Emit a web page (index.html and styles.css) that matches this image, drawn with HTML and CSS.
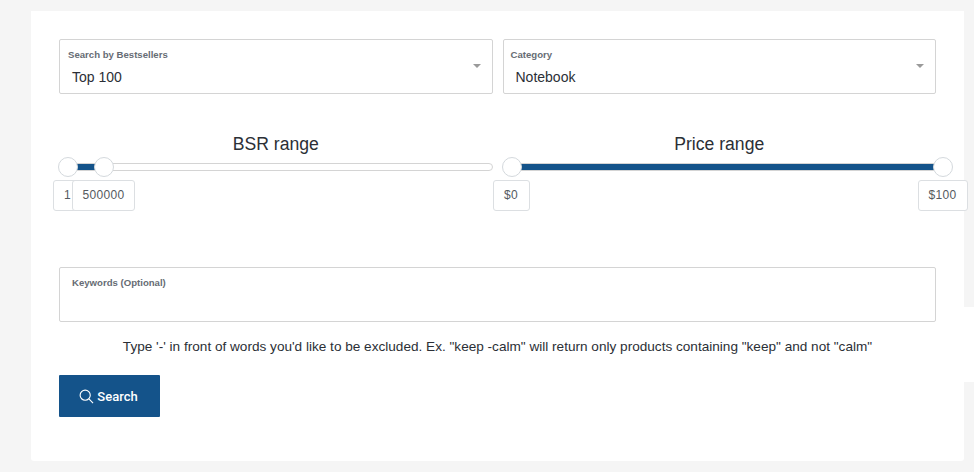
FILE: index.html
```html
<!DOCTYPE html>
<html lang="en">
<head>
<meta charset="utf-8">
<title>Search</title>
<link rel="stylesheet" href="styles.css">
</head>
<body>
<div class="gap-patch"></div>
<main class="card">
  <div class="row selects">
    <div class="field">
      <span class="label">Search by Bestsellers</span>
      <span class="value">Top 100</span>
      <span class="caret"></span>
    </div>
    <div class="field">
      <span class="label label-tight">Category</span>
      <span class="value">Notebook</span>
      <span class="caret"></span>
    </div>
  </div>
  <div class="row sliders">
    <section class="slider">
      <h2 class="slider-title">BSR range</h2>
      <div class="rail bsr-rail">
        <div class="fill bsr-fill"></div>
        <span class="handle bsr-low"></span>
        <span class="handle bsr-high"></span>
        <span class="tip bsr-low-tip">1</span>
        <span class="tip bsr-high-tip">500000</span>
      </div>
    </section>
    <section class="slider">
      <h2 class="slider-title">Price range</h2>
      <div class="rail price-rail">
        <div class="fill price-fill"></div>
        <span class="handle price-low"></span>
        <span class="handle price-high"></span>
        <span class="tip price-low-tip">$0</span>
        <span class="tip price-high-tip">$100</span>
      </div>
    </section>
  </div>
  <div class="field keywords">
    <span class="label">Keywords (Optional)</span>
  </div>
  <p class="hint">Type '-' in front of words you'd like to be excluded. Ex. "keep -calm" will return only products containing "keep" and not "calm"</p>
  <button class="search" type="button">
    <svg class="search-icon" viewBox="0 0 16 16" width="15" height="15" aria-hidden="true"><circle cx="6.6" cy="6.6" r="5.4"/><path d="M10.6 10.6 15 15"/></svg>
    Search
  </button>
</main>
</body>
</html>
```
FILE: styles.css
```css
* { box-sizing: border-box; }
html, body { height: 100%; }
body {
  margin: 0;
  background: #f5f5f5;
  font-family: "Liberation Sans", Arial, sans-serif;
  color: #2b2f36;
  overflow: hidden;
  position: relative;
}
.gap-patch {
  position: absolute;
  left: 964px;
  top: 307px;
  width: 10px;
  height: 75px;
  background: #fff;
}
.card {
  position: relative;
  width: 933px;
  height: 450px;
  margin: 11px 0 0 31px;
  padding: 28px 28px 0;
  background: #fff;
  border-radius: 0 0 3px 3px;
}
.row { display: flex; gap: 10px; }
.field {
  position: relative;
  display: block;
  flex: 1 1 0;
  height: 55px;
  border: 1px solid #d4d4d4;
  border-radius: 2px;
  background: #fff;
}
.label {
  position: absolute;
  left: 8px;
  top: 9px;
  font-size: 9.6px;
  line-height: 12px;
  font-weight: 700;
  color: #666c74;
  white-space: nowrap;
}
.label-tight { left: 7px; }
.value {
  position: absolute;
  left: 12px;
  top: 29px;
  font-size: 14px;
  line-height: 16px;
  color: #2b2f36;
}
.caret {
  position: absolute;
  right: 11px;
  top: 24px;
  width: 0;
  height: 0;
  border-left: 4px solid transparent;
  border-right: 4px solid transparent;
  border-top: 4px solid #9a9a9a;
}
.sliders { margin-top: 39px; height: 134px; }
.slider { flex: 1 1 0; min-width: 0; }
.slider-title {
  margin: 0;
  height: 22px;
  font-size: 17.6px;
  line-height: 22px;
  font-weight: 400;
  text-align: center;
  color: #2b2f36;
}
.rail {
  position: relative;
  height: 8px;
  margin-top: 8px;
  background: #fff;
  border: 1px solid #d4d4d4;
  border-radius: 4px;
}
.fill { position: absolute; top: 0; bottom: 0; background: #14538a; }
.bsr-fill { left: 9px; width: 35px; }
.price-fill { left: 8px; width: 431px; }
.price-rail { margin-right: -7px; }
.handle {
  position: absolute;
  top: -7px;
  width: 20px;
  height: 20px;
  background: #fff;
  border: 1px solid #d4d9dd;
  border-radius: 50%;
}
.bsr-low { left: -2px; }
.bsr-high { left: 34px; }
.price-low { left: -2px; }
.price-high { left: 429px; }
.tip {
  position: absolute;
  top: 16px;
  height: 31px;
  padding: 0 8px;
  font-size: 12px;
  line-height: 29px;
  letter-spacing: .3px;
  color: #555a60;
  background: #fff;
  border: 1px solid #dcdfe2;
  border-radius: 3px;
  white-space: nowrap;
}
.bsr-low-tip { left: -7px; width: 26px; padding-left: 10px; }
.bsr-high-tip { left: 12px; width: 63px; text-align: center; padding: 0; }
.price-low-tip { left: -11px; width: 37px; text-align: center; padding: 0; }
.price-high-tip { left: 414px; width: 50px; text-align: center; padding: 0; }
.keywords { width: 100%; flex: none; }
.keywords .label { left: 12px; top: 9px; }
.hint {
  margin: 17px 0 0;
  font-size: 13.6px;
  line-height: 16px;
  text-align: center;
  color: #2b2f36;
}
.search {
  display: flex;
  align-items: center;
  justify-content: center;
  gap: 3px;
  width: 101px;
  height: 42px;
  margin-top: 20px;
  padding: 0 2px 0 0;
  background: #14538a;
  border: 0;
  border-radius: 1px;
  color: #fff;
  font-family: Roboto, sans-serif;
  font-size: 13px;
  font-weight: 500;
}
.search-icon { fill: none; stroke: #fff; stroke-width: 1.2; }
```
